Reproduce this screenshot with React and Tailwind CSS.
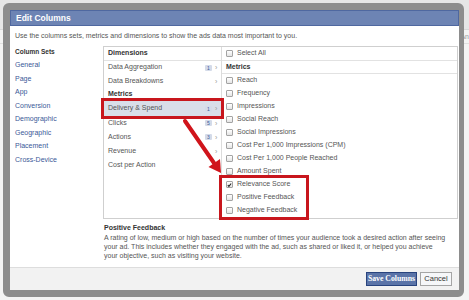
import React from 'react';

const NAV = ['General', 'Page', 'App', 'Conversion', 'Demographic', 'Geographic', 'Placement', 'Cross-Device'];

const METRICS = [
  'Reach',
  'Frequency',
  'Impressions',
  'Social Reach',
  'Social Impressions',
  'Cost Per 1,000 Impressions (CPM)',
  'Cost Per 1,000 People Reached',
  'Amount Spent',
];

const FEEDBACK = [
  { label: 'Relevance Score', checked: true },
  { label: 'Positive Feedback' },
  { label: 'Negative Feedback' },
];

function Checkbox({ checked }) {
  return (
    <span className="w-[7px] h-[7px] flex-shrink-0 rounded-[1px] border border-[#a3a3a3] bg-gradient-to-b from-white to-[#e4e4e4] flex items-center justify-center">
      {checked && (
        <svg width="6" height="6" viewBox="0 0 6 6" fill="none" stroke="#222" strokeWidth="1.3">
          <path d="M1 3.2l1.3 1.4L5 1.2" />
        </svg>
      )}
    </span>
  );
}

function MetricRow({ label, checked }) {
  return (
    <div className="h-[13px] flex items-center gap-[4px] pl-[4px] whitespace-nowrap">
      <Checkbox checked={checked} />
      <span className="text-[7px] text-[#555]">{label}</span>
    </div>
  );
}

function GroupRow({ label, badge, arrow, h = 'h-[14px]', selected }) {
  return (
    <div
      className={`${h} flex items-center pl-[4px] pr-[3px] relative ${
        selected ? 'bg-[#d9dee9] outline-[3px] outline-solid outline-[#c8161d] z-10' : ''
      }`}
    >
      <span className="flex-1 text-[7px] text-[#555] whitespace-nowrap">{label}</span>
      {badge && (
        <span className="h-[6px] min-w-[7px] px-[1px] rounded-[1px] bg-[#d4dbe9] text-[5px] leading-[6px] text-[#3b5998] text-center mr-[3px]">
          {badge}
        </span>
      )}
      {arrow && <span className="text-[7px] leading-none text-[#999] w-[3px]">›</span>}
    </div>
  );
}

export default function App() {
  return (
    <div className="w-[469px] h-[300px] relative overflow-hidden bg-[#f4f4f4] font-['Liberation_Sans',Arial,sans-serif]">
      {/* page behind */}
      <div className="h-[30px] bg-[#e6e6e6] border-b border-[#d8d8d8]" />
      <div className="h-[14px] border-b border-[#e0e0e0] flex justify-end pr-[0px]">
        <span className="text-[7px] text-[#999] leading-[14px]">An</span>
      </div>

      {/* dialog */}
      <div className="absolute left-[3px] top-[3px] w-[461px] h-[294px] rounded-[6px] border-t-[7px] border-b-[7px] border-l-[7px] border-r-[5px] border-[#8d8d8d] flex flex-col bg-white">
        <div className="h-[16px] bg-[#6d84b4] border border-[#4f68a0] pl-[5px] flex items-center">
          <span className="text-[8.5px] font-bold text-white">Edit Columns</span>
        </div>

        <div className="flex-1 flex flex-col">
          <div className="h-[20px] pl-[5px] pt-[5px] text-[7px] leading-[9px] text-[#555]">
            Use the columns sets, metrics and dimensions to show the ads data most important to you.
          </div>

          <div className="flex flex-1">
            {/* column sets */}
            <div className="w-[93px] pl-[5px] pt-[1px]">
              <div className="h-[11px] text-[6.5px] leading-[10px] text-[#333] font-semibold">Column Sets</div>
              {NAV.map((n) => (
                <div key={n} className="text-[7px] leading-[13.5px] text-[#3b5998]">
                  {n}
                </div>
              ))}
            </div>

            <div className="flex-1 flex flex-col pr-[1px]">
              <div className="h-[173px] border border-[#cfcfcf] flex">
                {/* groups */}
                <div className="w-[118px] border-r border-[#dcdcdc]">
                  <div className="h-[14px] border-b border-[#e2e2e2] flex items-center pl-[4px] text-[7px] font-bold text-[#333]">
                    Dimensions
                  </div>
                  <GroupRow label="Data Aggregation" badge="1" arrow h="h-[13px]" />
                  <GroupRow label="Data Breakdowns" arrow />
                  <div className="h-[13px] flex items-center pl-[4px] text-[7px] font-bold text-[#333]">Metrics</div>
                  <GroupRow label="Delivery & Spend" badge="1" arrow h="h-[15px]" selected />
                  <GroupRow label="Clicks" badge="5" arrow />
                  <GroupRow label="Actions" badge="3" arrow />
                  <GroupRow label="Revenue" arrow />
                  <GroupRow label="Cost per Action" />
                </div>

                {/* metrics */}
                <div className="flex-1">
                  <div className="h-[14px] border-b border-[#e2e2e2] flex items-center gap-[4px] pl-[4px]">
                    <Checkbox />
                    <span className="text-[7px] text-[#555]">Select All</span>
                  </div>
                  <div className="h-[13px] border-b border-[#e2e2e2] flex items-center pl-[4px] text-[7px] font-bold text-[#333]">
                    Metrics
                  </div>
                  {METRICS.map((m) => (
                    <MetricRow key={m} label={m} />
                  ))}
                  <div className="w-[84px] outline-[3px] outline-solid outline-[#c8161d] relative z-10">
                    {FEEDBACK.map((f) => (
                      <MetricRow key={f.label} label={f.label} checked={f.checked} />
                    ))}
                  </div>
                </div>
              </div>

              <div className="pt-[4px] pl-[1px] text-[7px] text-[#555]">
                <div className="leading-[10px] font-bold text-[#333]">Positive Feedback</div>
                <div className="leading-[9px] whitespace-nowrap">
                  A rating of low, medium or high based on the number of times your audience took a desired action after seeing
                </div>
                <div className="leading-[9px] whitespace-nowrap">
                  your ad. This includes whether they engaged with the ad, such as shared or liked it, or helped you achieve
                </div>
                <div className="leading-[9px] whitespace-nowrap">your objective, such as visiting your website.</div>
              </div>
            </div>
          </div>
        </div>

        <div className="h-[23px] border-t border-[#dddddd] bg-[#f2f2f2] flex items-center justify-end gap-[3px] pr-[7px]">
          <button className="h-[14px] w-[51px] bg-[#5b74a8] border border-[#29447e] text-white font-bold text-[7.75px] font-['Liberation_Serif','Times_New_Roman',serif] leading-none">
            Save Columns
          </button>
          <button className="h-[14px] w-[32px] bg-[#f6f7f9] border border-[#a5a5a5] text-[#333] text-[7.5px] leading-none">
            Cancel
          </button>
        </div>
      </div>

      {/* annotation arrow */}
      <svg className="absolute left-0 top-0 pointer-events-none" width="469" height="300" viewBox="0 0 469 300">
        <line x1="185" y1="121" x2="214" y2="163" stroke="#d0141b" strokeWidth="4" strokeLinecap="round" />
        <polygon points="221,173 208.5,167 220,159" fill="#d0141b" />
      </svg>
    </div>
  );
}
